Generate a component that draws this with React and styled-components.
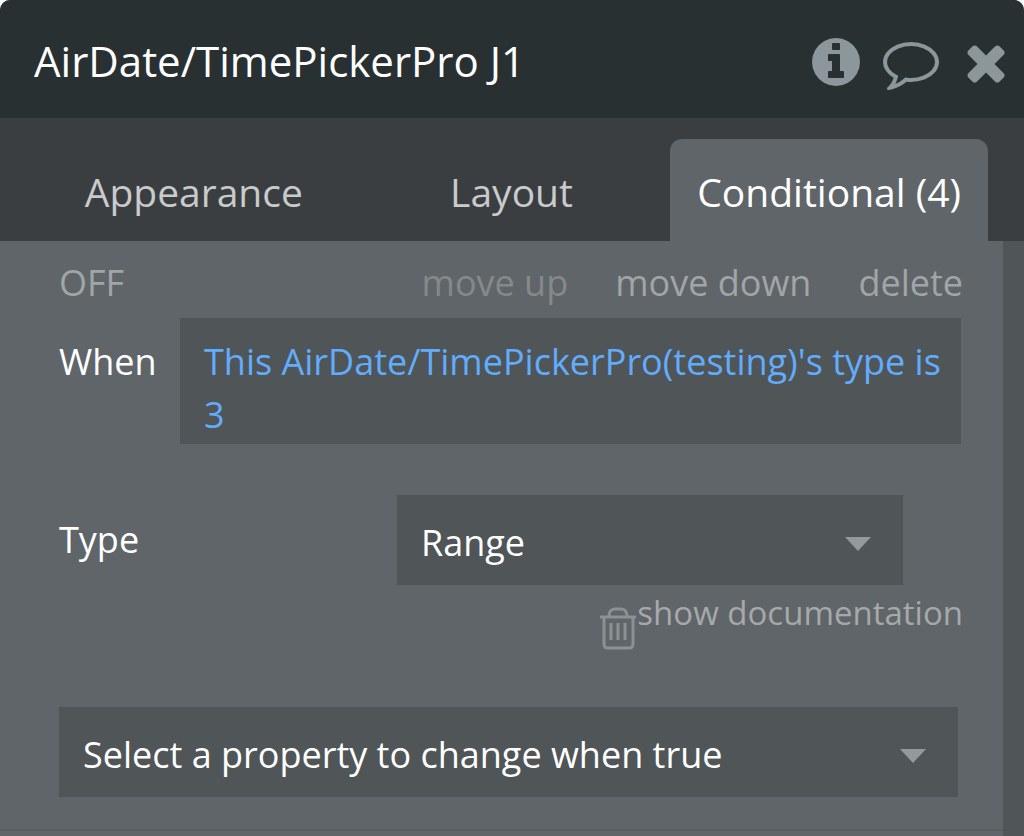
import React, { useState } from "react";
import styled, { createGlobalStyle, css } from "styled-components";

const GlobalStyle = createGlobalStyle`
  * {
    box-sizing: border-box;
  }

  body {
    margin: 0;
    background-color: #ffffff;
    font-family: "Open Sans", "Noto Sans", sans-serif;
  }

  button,
  select {
    font-family: inherit;
  }
`;

const Panel = styled.main`
  display: flex;
  flex-direction: column;
  min-height: 100vh;
  overflow: hidden;
  border-radius: 10px 10px 0 0;
  background-color: #606569;
`;

const PanelHeader = styled.header`
  display: flex;
  align-items: center;
  justify-content: space-between;
  height: 118px;
  padding: 4px 10px 0 34px;
  background-color: #293032;
`;

const PanelTitle = styled.h1`
  margin: 0;
  color: #ffffff;
  font-size: 42px;
  line-height: 56px;
  font-weight: 400;
  white-space: nowrap;
`;

const HeaderActions = styled.div`
  display: flex;
  gap: 19px;
  padding-top: 2px;
`;

const PlainButton = styled.button`
  padding: 0;
  border: none;
  background: none;
  cursor: pointer;
`;

const IconButton = styled(PlainButton)`
  display: flex;
  color: #8c979b;

  svg {
    display: block;
    fill: currentColor;
  }
`;

const TabBar = styled.div`
  display: grid;
  grid-template-columns: repeat(3, 1fr);
  align-items: end;
  height: 123px;
  padding: 0 36px 0 35px;
  background-color: #3a3e41;
`;

const Tab = styled(PlainButton)`
  height: 102px;
  padding-top: 2px;
  border-radius: 12px 12px 0 0;
  color: #c9cacb;
  font-size: 39px;
  white-space: nowrap;

  ${(props) =>
    props.$active &&
    css`
      background-color: #606569;
      color: #ffffff;
    `}
`;

const PanelBody = styled.div`
  display: flex;
  flex: 1;
`;

const ScrollTrack = styled.div`
  width: 21px;
  background-color: #505558;
`;

const Content = styled.div`
  flex: 1;
  min-width: 0;
`;

const Condition = styled.section`
  padding: 16px 40px 32px 59px;
  border-bottom: 2px solid #585d60;
`;

const ConditionToolbar = styled.div`
  display: flex;
  align-items: center;
  justify-content: space-between;
  height: 52px;
`;

const ToolbarLinks = styled.div`
  display: flex;
  gap: 47px;
`;

const TextButton = styled(PlainButton)`
  color: ${(props) => (props.disabled ? "#85898b" : "#a0a5a7")};
  font-size: 36px;
  line-height: 52px;
  white-space: nowrap;
`;

const WhenRow = styled.div`
  display: grid;
  grid-template-columns: 121px 1fr;
  margin: 9px 2px 0 0;
`;

const FieldLabel = styled.label`
  padding-top: ${(props) => props.$top || 0}px;
  color: #ffffff;
  font-size: 36px;
  line-height: 52px;
`;

const Expression = styled(PlainButton)`
  padding: 17px 12px 3px 24px;
  background-color: #505558;
  color: #62acfc;
  font-size: 36px;
  line-height: 53px;
  text-align: left;
`;

const PropertyRow = styled.div`
  display: grid;
  grid-template-columns: 338fr 506fr 60fr;
  align-items: center;
  margin-top: 51px;
`;

const SelectBox = styled.div`
  position: relative;
  height: 90px;
`;

const StyledSelect = styled.select`
  appearance: none;
  width: 100%;
  height: 100%;
  padding: 4px 60px 0 24px;
  border: none;
  border-radius: 0;
  background-color: #505558;
  color: #ffffff;
  font-size: 36px;
`;

const Caret = styled.svg`
  position: absolute;
  top: 42px;
  right: 32px;
  fill: #929a9d;
  pointer-events: none;
`;

const DocumentationRow = styled.div`
  display: flex;
  justify-content: flex-end;
  align-items: flex-start;
  height: 64px;
`;

const TrashButton = styled(IconButton)`
  padding-top: 20px;
  color: #8c9193;
`;

const DocumentationLink = styled.a`
  color: #a6a9aa;
  font-size: 33px;
  line-height: 56px;
  text-decoration: none;
  white-space: nowrap;
`;

const AddProperty = styled.div`
  margin: 58px 5px 0 0;
`;

const InfoIcon = () => (
  <svg width="56" height="56" viewBox="0 0 1792 1792">
    <path d="M1152 1376v-160q0-14-9-23t-23-9h-96v-512q0-14-9-23t-23-9h-320q-14 0-23 9t-9 23v160q0 14 9 23t23 9h96v320h-96q-14 0-23 9t-9 23v160q0 14 9 23t23 9h448q14 0 23-9t9-23zm-128-896v-160q0-14-9-23t-23-9h-192q-14 0-23 9t-9 23v160q0 14 9 23t23 9h192q14 0 23-9t9-23zm640 416q0 209-103 385.5t-279.5 279.5-385.5 103-385.5-103-279.5-279.5-103-385.5 103-385.5 279.5-279.5 385.5-103 385.5 103 279.5 279.5 103 385.5z" />
  </svg>
);

const CommentIcon = () => (
  <svg width="56" height="56" viewBox="0 0 1792 1792">
    <path d="M896 384q-204 0-381.5 69.5t-282 187.5-104.5 255q0 112 71.5 213.5t201.5 175.5l87 50-27 96q-24 91-70 172 152-63 275-171l43-38 57 6q69 8 130 8 204 0 381.5-69.5t282-187.5 104.5-255-104.5-255-282-187.5-381.5-69.5zm896 512q0 174-120 321.5t-326 233-450 85.5q-70 0-145-8-198 175-460 242-49 14-114 22h-5q-15 0-27-10.5t-16-27.5v-1q-3-4-.5-12t2-10 4.5-9.5l6-9 7-8.5 8-9q7-8 31-34.5t34.5-38 31-39.5 32.5-51 27-59 26-76q-157-89-247.5-220t-90.5-281q0-174 120-321.5t326-233 450-85.5 450 85.5 326 233 120 321.5z" />
  </svg>
);

const CloseIcon = () => (
  <svg width="56" height="56" viewBox="0 0 1792 1792">
    <path d="M1490 1322q0 40-28 68l-136 136q-28 28-68 28t-68-28l-294-294-294 294q-28 28-68 28t-68-28l-136-136q-28-28-28-68t28-68l294-294-294-294q-28-28-28-68t28-68l136-136q28-28 68-28t68 28l294 294 294-294q28-28 68-28t68 28l136 136q28 28 28 68t-28 68l-294 294 294 294q28 28 28 68z" />
  </svg>
);

const TrashIcon = () => (
  <svg width="38" height="46" viewBox="0 0 38 46">
    <g fill="none" stroke="currentColor" strokeWidth="3">
      <path d="M1 12H37" />
      <path d="M10 11C10 6 13 4 16 4H22C25 4 28 6 28 11" />
      <path d="M5 13V39Q5 43 9 43H30Q34 43 34 39V13" />
      <path d="M12 18V35M19 18V35M26 18V35" />
    </g>
  </svg>
);

const Select = ({ id, options, ...rest }) => {
  const [value, setValue] = useState(options[0]);

  return (
    <SelectBox>
      <StyledSelect
        id={id}
        value={value}
        onChange={(e) => setValue(e.target.value)}
        {...rest}
      >
        {options.map((option) => (
          <option key={option}>{option}</option>
        ))}
      </StyledSelect>
      <Caret width="26" height="14" viewBox="0 0 26 14" aria-hidden="true">
        <path d="M0 0H26L13 14Z" />
      </Caret>
    </SelectBox>
  );
};

const tabs = ["Appearance", "Layout", "Conditional (4)"];

const App = () => {
  const [activeTab, setActiveTab] = useState(tabs[2]);

  return (
    <>
      <GlobalStyle />
      <Panel>
        <PanelHeader>
          <PanelTitle>AirDate/TimePickerPro J1</PanelTitle>
          <HeaderActions>
            <IconButton aria-label="Info">
              <InfoIcon />
            </IconButton>
            <IconButton aria-label="Comment">
              <CommentIcon />
            </IconButton>
            <IconButton aria-label="Close">
              <CloseIcon />
            </IconButton>
          </HeaderActions>
        </PanelHeader>

        <TabBar role="tablist">
          {tabs.map((tab) => (
            <Tab
              key={tab}
              role="tab"
              aria-selected={tab === activeTab}
              $active={tab === activeTab}
              onClick={() => setActiveTab(tab)}
            >
              {tab}
            </Tab>
          ))}
        </TabBar>

        <PanelBody>
          <Content>
            <Condition>
              <ConditionToolbar>
                <TextButton>OFF</TextButton>
                <ToolbarLinks>
                  <TextButton disabled>move up</TextButton>
                  <TextButton>move down</TextButton>
                  <TextButton>delete</TextButton>
                </ToolbarLinks>
              </ConditionToolbar>

              <WhenRow>
                <FieldLabel htmlFor="when" $top={18}>
                  When
                </FieldLabel>
                <Expression id="when">
                  This AirDate/TimePickerPro(testing)'s type is 3
                </Expression>
              </WhenRow>

              <PropertyRow>
                <FieldLabel htmlFor="type">Type</FieldLabel>
                <Select id="type" options={["Range", "Single", "Multiple"]} />
              </PropertyRow>

              <DocumentationRow>
                <TrashButton aria-label="Remove property">
                  <TrashIcon />
                </TrashButton>
                <DocumentationLink href="#documentation">
                  show documentation
                </DocumentationLink>
              </DocumentationRow>

              <AddProperty>
                <Select
                  aria-label="Property to change"
                  options={["Select a property to change when true", "Type"]}
                />
              </AddProperty>
            </Condition>
          </Content>
          <ScrollTrack />
        </PanelBody>
      </Panel>
    </>
  );
};

export default App;
